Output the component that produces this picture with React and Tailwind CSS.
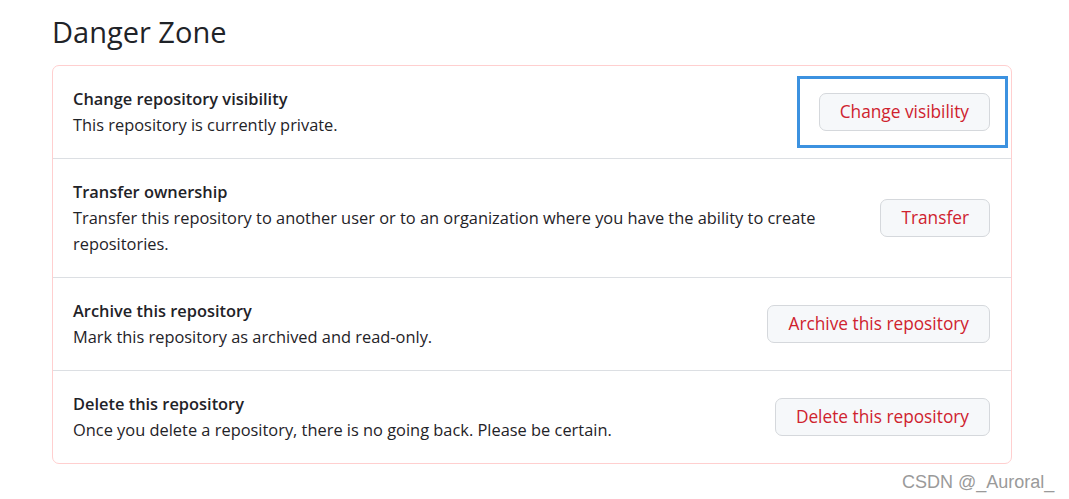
import React from "react";

const rows = [
  { title: "Change repository visibility", desc: "This repository is currently private.", btn: "Change visibility", focus: true },
  { title: "Transfer ownership", desc: "Transfer this repository to another user or to an organization where you have the ability to create repositories.", btn: "Transfer" },
  { title: "Archive this repository", desc: "Mark this repository as archived and read-only.", btn: "Archive this repository" },
  { title: "Delete this repository", desc: "Once you delete a repository, there is no going back. Please be certain.", btn: "Delete this repository" },
];

export default function App() {
  return (
    <div className="relative w-[1069px] h-[499px] bg-white text-[#1f2328]" style={{ fontFamily: '"Open Sans", "Noto Sans", sans-serif' }}>
      <div className="pl-[52px] pt-[12px] w-[1012px]">
        <h2 className="text-[29px] leading-[40px] font-normal">Danger Zone</h2>
        <div className="mt-[13px] border border-[#ffcfcf] rounded-[7px]">
          {rows.map((r, i) => (
            <div key={i} className={`flex items-center justify-between pl-[20px] pr-[21px] py-[20px] ${i > 0 ? "border-t border-[#dcdfe3]" : ""}`}>
              <div className="text-[16.4px] leading-[26px] max-w-[770px]">
                <div className="font-semibold">{r.title}</div>
                <div>{r.desc}</div>
              </div>
              <div className="relative shrink-0 ml-4">
                {r.focus && (
                  <div className="absolute -left-[22px] -right-[18px] -top-[17px] -bottom-[17px] border-[3px] border-[#3c92e0]" />
                )}
                <button className="h-[38px] px-[20px] rounded-[7px] border border-[#d5d8dc] bg-[#f6f8fa] text-[#cf222e] text-[17.3px] font-medium">
                  {r.btn}
                </button>
              </div>
            </div>
          ))}
        </div>
      </div>
      <div className="absolute left-[902px] top-[469px] text-[18px] text-[#9a9a9a]" style={{ fontFamily: '"Liberation Sans", Arial, sans-serif' }}>
        CSDN @_Auroral_
      </div>
    </div>
  );
}
